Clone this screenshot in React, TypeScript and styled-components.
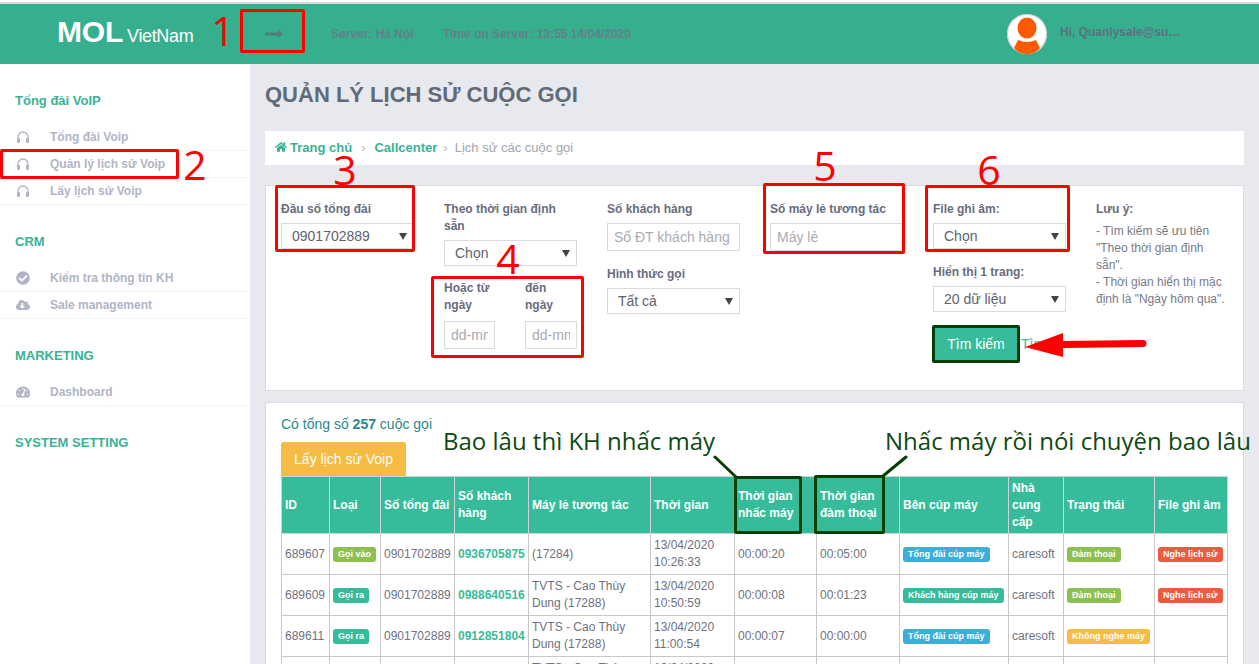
import React from "react";
import styled, { createGlobalStyle } from "styled-components";
import { FaCheckCircle, FaCloudDownloadAlt, FaTachometerAlt, FaHome } from "react-icons/fa";

const Global = createGlobalStyle`
  html, body { margin: 0; padding: 0; background: #fff; }
  * { box-sizing: border-box; }
  body { font-family: "Liberation Sans", Arial, sans-serif; font-size: 12px; color: #6f7180; }
`;

const Page = styled.div`
  position: relative; width: 1259px; height: 664px; overflow: hidden; padding-top: 2px; background: #fff;
`;
const Header = styled.header`
  display: flex; align-items: center; height: 62px; border-top: 2px solid #d9dbdc; background: #36af8f; padding-left: 57px;
`;
const Logo = styled.div`
  display: flex; align-items: baseline; width: 208px; margin-top: -5px; color: #fff; font-family: "Liberation Sans", Arial, sans-serif;
`;
const LogoMain = styled.span` font-size: 30px; font-weight: 700; letter-spacing: -0.2px; `;
const LogoSub = styled.span` font-size: 18px; margin-left: 4px; letter-spacing: -0.35px; `;
const Toggle = styled.div` display: flex; align-items: center; width: 66px; color: #4f7f78; `;
const HeaderText = styled.span` font-weight: 700; font-size: 12px; color: #62808a; `;
const ServerText = styled(HeaderText)` width: 112px; `;
const TimeText = styled(HeaderText)` width: 564px; `;
const UserText = styled(HeaderText)` color: #5f6f7d; margin: -5px 0 0 13px; `;
const Avatar = styled.svg` flex: none; `;

const Body = styled.div` display: flex; height: 600px; `;
const Sidebar = styled.aside` width: 250px; flex: none; padding-top: 14px; background: #fff; `;
const Section = styled.section` & + & { margin-top: 14px; } `;
const SectionTitle = styled.div`
  height: 46px; line-height: 46px; padding-left: 15px; color: #37b396; font-weight: 700; font-size: 13px;
`;
const SideItem = styled.div`
  display: flex; align-items: center; height: 27px; padding-left: 16px; border-bottom: 1px solid #f2f3f5; color: #b0b5c6; font-weight: 700; font-size: 12px;
  svg { width: 14px; height: 14px; flex: none; margin-right: 20px; }
`;

const Main = styled.main` flex: 1; background: #e7e9ee; padding: 0 15px; min-width: 0; `;
const Title = styled.h1`
  margin: 0 0 22px; padding-top: 17px; line-height: 28px; font-size: 22px; font-weight: 700; color: #626a78;
`;
const Crumbs = styled.nav`
  display: flex; align-items: center; height: 34px; margin-bottom: 20px; padding: 0 0 2px 10px; background: #fff; font-size: 13px; color: #a2a5ad;
`;
const CrumbLink = styled.span`
  display: inline-flex; align-items: center; gap: 3px; color: #37b396; font-weight: 700; font-size: 13px;
`;
const CrumbSep = styled.span<{ $l: number; $r: number }>`
  margin: 0 ${(p) => p.$r}px 0 ${(p) => p.$l}px; color: #b5b8bf;
`;

const Panel = styled.section` background: #fff; border: 1px solid #d9dce3; `;
const FilterPanel = styled(Panel)`
  display: grid; grid-template-columns: repeat(5, 163px) 1fr; height: 206px; margin-bottom: 11px; padding: 15px 0 0 15px;
`;
const Col = styled.div` padding-right: 30px; `;
const Label = styled.div` font-weight: 700; font-size: 12px; line-height: 17px; color: #686c7e; margin-bottom: 5px; `;
const LabelGap = styled(Label)` margin-top: 15px; `;
const SelectWrap = styled.div`
  position: relative; height: 26px;
  &::after {
    content: ""; position: absolute; right: 7px; top: 10px; border-style: solid; border-width: 7px 4px 0; border-color: #444 transparent transparent;
  }
`;
const Select = styled.select`
  appearance: none; width: 100%; height: 100%; border: 1px solid #d9dbde; border-radius: 0; background: #fff; padding: 0 0 0 10px;
  font-family: inherit; font-size: 14px; color: #60636e; outline: none;
`;
const Input = styled.input`
  display: block; width: 100%; height: 28px; border: 1px solid #d9dbde; padding: 0 6px; font-family: inherit; font-size: 14px; outline: none; background: #fff;
  &::placeholder { color: #a9abb2; opacity: 1; }
`;
const DateRow = styled.div` display: grid; grid-template-columns: 51px 52px; column-gap: 30px; margin-top: 14px; `;
const DateLabel = styled(Label)` margin-bottom: 7px; `;
const SearchRow = styled.div` display: flex; align-items: center; margin: 13px 0 0 -1px; `;
const SearchButton = styled.button`
  width: 88px; height: 38px; flex: none; border: 3px solid #063f06; border-radius: 2px; background: #37bc9b; color: #fff; font-family: inherit; font-size: 14px; padding: 0;
`;
const SearchLink = styled.span` margin-left: 1px; font-size: 14px; color: #37bc9b; `;
const Note = styled.div` font-size: 12px; line-height: 17px; color: #777a88; width: 132px; `;
const NoteTitle = styled.div` font-weight: 700; color: #686c7e; margin-bottom: 5px; `;

const ResultPanel = styled(Panel)` padding: 13px 0 0 15px; height: 300px; `;
const Count = styled.div` font-size: 14px; line-height: 17px; color: #2b8a84; margin-bottom: 9px; b { font-weight: 700; } `;
const YellowButton = styled.button`
  display: block; width: 125px; height: 34px; border: 0; border-radius: 3px 3px 0 0; background: #f6bb42; color: #fff; font-family: inherit; font-size: 14px; padding: 0;
`;
const Table = styled.table`
  width: 946px; table-layout: fixed; border-collapse: collapse; font-size: 12px; line-height: 17px; color: #6f7180;
`;
const Th = styled.th`
  height: 57px; padding: 0 2px 0 3px; background: #37bc9b; color: #fff; text-align: left; font-weight: 700; border: 1px solid #cfd3d6;
`;
const Td = styled.td` height: 41px; padding: 3px 2px 3px 3px; border: 1px solid #c8c8ca; white-space: normal; `;
const NumCell = styled(Td)` padding-right: 0; white-space: nowrap; `;
const Phone = styled.span` color: #37bc9b; font-weight: 700; `;
const colors: Record<string, string> = { green: "#8cc152", teal: "#37bc9b", blue: "#3bafda", red: "#ee5a40", yellow: "#f6bb42" };
const Badge = styled.span<{ $c: string }>`
  display: inline-block; height: 15px; line-height: 15px; padding: 0 5px; border-radius: 3px; background: ${(p) => colors[p.$c]};
  color: #fff; font-size: 9px; font-weight: 700; white-space: nowrap; vertical-align: middle;
`;

/* annotations lying over the page */
const Box = styled.div<{ $x: number; $y: number; $w: number; $h: number; $dark?: boolean }>`
  position: absolute; left: ${(p) => p.$x}px; top: ${(p) => p.$y}px; width: ${(p) => p.$w}px; height: ${(p) => p.$h}px;
  border: 3px solid ${(p) => (p.$dark ? "#063f06" : "#f00")}; border-radius: 2px; pointer-events: none;
`;
const Num = styled.div<{ $x: number; $y: number }>`
  position: absolute; left: ${(p) => p.$x}px; top: ${(p) => p.$y}px; transform: translate(-50%, -50%);
  font-family: "Open Sans", sans-serif; font-size: 41px; line-height: 1; color: #f00;
`;
const Note2 = styled.div<{ $x: number; $y: number }>`
  position: absolute; left: ${(p) => p.$x}px; top: ${(p) => p.$y}px; white-space: nowrap;
  font-family: "Open Sans", sans-serif; font-size: 24px; line-height: 30px; color: #0d4a10;
`;
const Drawing = styled.svg` position: absolute; left: 0; top: 0; pointer-events: none; `;

const Headset = () => (
  <svg viewBox="0 0 14 14">
    <path d="M2 9.500V7a5 5 0 0 1 10 0v2.500" fill="none" stroke="currentColor" strokeWidth="1.300" />
    <rect x="1" y="8" width="3" height="5" rx="1" fill="currentColor" />
    <rect x="10" y="8" width="3" height="5" rx="1" fill="currentColor" />
  </svg>
);

const cols = [48, 51, 74, 74, 122, 84, 82, 83, 109, 55, 91, 73];
const heads = ["ID", "Loại", "Số tổng đài", "Số khách hàng", "Máy lẻ tương tác", "Thời gian", "Thời gian nhấc máy", "Thời gian đàm thoại", "Bên cúp máy", "Nhà cung cấp", "Trạng thái", "File ghi âm"];
const rows = [
  { id: "689607", t: ["Gọi vào", "green"], phone: "0936705875", ext: "(17284)", d: "10:26:33", date: "13/04/2020", a: "00:00:20", b: "00:05:00", by: ["Tổng đài cúp máy", "blue"], st: ["Đàm thoại", "green"], rec: true },
  { id: "689609", t: ["Gọi ra", "teal"], phone: "0988640516", ext: "TVTS - Cao Thùy Dung (17288)", d: "10:50:59", date: "13/04/2020", a: "00:00:08", b: "00:01:23", by: ["Khách hàng cúp máy", "teal"], st: ["Đàm thoại", "green"], rec: true },
  { id: "689611", t: ["Gọi ra", "teal"], phone: "0912851804", ext: "TVTS - Cao Thùy Dung (17288)", d: "11:00:54", date: "13/04/2020", a: "00:00:07", b: "00:00:00", by: ["Tổng đài cúp máy", "blue"], st: ["Không nghe máy", "yellow"], rec: false },
];

const Picker = ({ value }: { value: string }) => (
  <SelectWrap>
    <Select defaultValue={value}><option>{value}</option></Select>
  </SelectWrap>
);

export default function App() {
  return (
    <Page>
      <Global />
      <Header>
        <Logo><LogoMain>MOL</LogoMain><LogoSub>VietNam</LogoSub></Logo>
        <Toggle>
          <svg width="18" height="10" viewBox="0 0 18 10"><path d="M0 3.500h13V1l5 4-5 4V6.500H0z" fill="currentColor" /></svg>
        </Toggle>
        <ServerText>Server: Hà Nội</ServerText>
        <TimeText>Time on Server: 13:55 14/04/2020</TimeText>
        <Avatar width="40" height="40" viewBox="0 0 40 40">
          <ellipse cx="20" cy="20" rx="20" ry="20" fill="#fff" />
          <ellipse cx="20" cy="20" rx="19.5" ry="19.5" fill="none" stroke="#c9c9c9" />
          <ellipse cx="20" cy="14" rx="9.5" ry="10.5" fill="#fb5a00" />
          <path d="M11 26q9 4 18 0l4 8q-5 6-13 6t-13-6z" fill="#fb5a00" />
        </Avatar>
        <UserText>Hi, Quanlysale@su…</UserText>
      </Header>
      <Body>
        <Sidebar>
          <Section>
            <SectionTitle>Tổng đài VoIP</SectionTitle>
            <SideItem><Headset />Tổng đài Voip</SideItem>
            <SideItem><Headset />Quản lý lịch sử Voip</SideItem>
            <SideItem><Headset />Lấy lịch sử Voip</SideItem>
          </Section>
          <Section>
            <SectionTitle>CRM</SectionTitle>
            <SideItem><FaCheckCircle />Kiểm tra thông tin KH</SideItem>
            <SideItem><FaCloudDownloadAlt />Sale management</SideItem>
          </Section>
          <Section>
            <SectionTitle>MARKETING</SectionTitle>
            <SideItem><FaTachometerAlt />Dashboard</SideItem>
          </Section>
          <Section>
            <SectionTitle>SYSTEM SETTING</SectionTitle>
          </Section>
        </Sidebar>
        <Main>
          <Title>QUẢN LÝ LỊCH SỬ CUỘC GỌI</Title>
          <Crumbs>
            <CrumbLink><FaHome size={12} />Trang chủ</CrumbLink>
            <CrumbSep $l={9} $r={9}>›</CrumbSep>
            <CrumbLink>Callcenter</CrumbLink>
            <CrumbSep $l={6} $r={7}>›</CrumbSep>
            Lịch sử các cuộc gọi
          </Crumbs>
          <FilterPanel>
            <Col>
              <Label>Đầu số tổng đài</Label>
              <Picker value="0901702889" />
            </Col>
            <Col>
              <Label>Theo thời gian định sẵn</Label>
              <Picker value="Chọn" />
              <DateRow>
                <div>
                  <DateLabel>Hoặc từ<br />ngày</DateLabel>
                  <Input placeholder="dd-mm-yyyy" />
                </div>
                <div>
                  <DateLabel>đến<br />ngày</DateLabel>
                  <Input placeholder="dd-mm-yyyy" />
                </div>
              </DateRow>
            </Col>
            <Col>
              <Label>Số khách hàng</Label>
              <Input placeholder="Số ĐT khách hàng" />
              <LabelGap>Hình thức gọi</LabelGap>
              <Picker value="Tất cả" />
            </Col>
            <Col>
              <Label>Số máy lẻ tương tác</Label>
              <Input placeholder="Máy lẻ" />
            </Col>
            <Col>
              <Label>File ghi âm:</Label>
              <Picker value="Chọn" />
              <LabelGap>Hiển thị 1 trang:</LabelGap>
              <Picker value="20 dữ liệu" />
              <SearchRow>
                <SearchButton>Tìm kiếm</SearchButton>
                <SearchLink>Tìm</SearchLink>
              </SearchRow>
            </Col>
            <Note>
              <NoteTitle>Lưu ý:</NoteTitle>
              - Tìm kiếm sẽ ưu tiên "Theo thời gian định sẵn".<br />
              - Thời gian hiển thị mặc định là "Ngày hôm qua".
            </Note>
          </FilterPanel>
          <ResultPanel>
            <Count>Có tổng số <b>257</b> cuộc gọi</Count>
            <YellowButton>Lấy lịch sử Voip</YellowButton>
            <Table>
              <colgroup>{cols.map((w, i) => <col key={i} width={w} />)}</colgroup>
              <thead>
                <tr>{heads.map((h) => <Th key={h}>{h}</Th>)}</tr>
              </thead>
              <tbody>
                {rows.map((r) => (
                  <tr key={r.id}>
                    <Td>{r.id}</Td>
                    <Td><Badge $c={r.t[1]}>{r.t[0]}</Badge></Td>
                    <NumCell>{"0901702889"}</NumCell>
                    <NumCell><Phone>{r.phone}</Phone></NumCell>
                    <Td>{r.ext}</Td>
                    <Td>{r.date}<br />{r.d}</Td>
                    <Td>{r.a}</Td>
                    <Td>{r.b}</Td>
                    <Td><Badge $c={r.by[1]}>{r.by[0]}</Badge></Td>
                    <Td>caresoft</Td>
                    <Td><Badge $c={r.st[1]}>{r.st[0]}</Badge></Td>
                    <Td>{r.rec && <Badge $c="red">Nghe lịch sử</Badge>}</Td>
                  </tr>
                ))}
                <tr>
                  <Td /><Td /><Td /><Td />
                  <Td>TVTS - Cao Thùy Dung (17288)</Td>
                  <Td>13/04/2020<br />11:10:20</Td>
                  <Td /><Td /><Td /><Td /><Td /><Td />
                </tr>
              </tbody>
            </Table>
          </ResultPanel>
        </Main>
      </Body>

      <Box $x={240} $y={9} $w={65} $h={44} />
      <Box $x={0} $y={149} $w={179} $h={30} />
      <Box $x={275} $y={185} $w={140} $h={67} />
      <Box $x={431} $y={276} $w={153} $h={82} />
      <Box $x={763} $y={183} $w={142} $h={71} />
      <Box $x={925} $y={185} $w={145} $h={67} />
      <Box $dark $x={734} $y={476} $w={68} $h={58} />
      <Box $dark $x={814} $y={475} $w={71} $h={59} />
      <Num $x={223} $y={30}>1</Num>
      <Num $x={195} $y={164}>2</Num>
      <Num $x={345} $y={169}>3</Num>
      <Num $x={508} $y={258}>4</Num>
      <Num $x={825} $y={165}>5</Num>
      <Num $x={989} $y={169}>6</Num>
      <Note2 $x={443} $y={426}>Bao lâu thì KH nhấc máy</Note2>
      <Note2 $x={885} $y={426}>Nhấc máy rồi nói chuyện bao lâu</Note2>
      <Drawing width="1259" height="664" viewBox="0 0 1259 664">
        <path d="M715 457l21 20M883 476l23-19" stroke="#063f06" strokeWidth="3" strokeLinecap="round" fill="none" />
        <path d="M1025 347l38-14v8l80-1a3.500 3.500 0 0 1 0 7l-80 1v9z" fill="#f00" />
      </Drawing>
    </Page>
  );
}
